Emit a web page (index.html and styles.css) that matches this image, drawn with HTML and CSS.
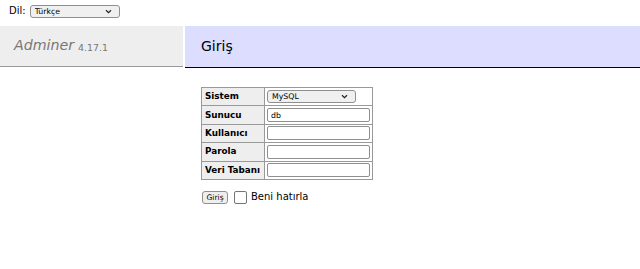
FILE: index.html
```html
<!DOCTYPE html>
<html lang="tr">
<head>
<meta charset="utf-8">
<title>Giriş - Adminer</title>
<link rel="stylesheet" href="styles.css">
</head>
<body>
<div class="lang">
  <span class="lang-label">Dil:</span>
  <span class="select select-lang">
    <select><option>Türkçe</option></select>
    <svg class="chev" width="7" height="5" viewBox="0 0 7 5"><path d="M1 1.2 L3.5 3.6 L6 1.2" fill="none" stroke="#222" stroke-width="1.2"/></svg>
  </span>
</div>
<div class="top">
  <h1 class="brand"><span class="brand-name">Adminer</span> <span class="version">4.17.1</span></h1>
  <h2 class="title">Giriş</h2>
</div>
<form class="login">
  <table class="layout">
    <tr><th>Sistem</th><td>
      <span class="select select-driver">
        <select><option>MySQL</option></select>
        <svg class="chev" width="7" height="5" viewBox="0 0 7 5"><path d="M1 1.2 L3.5 3.6 L6 1.2" fill="none" stroke="#222" stroke-width="1.2"/></svg>
      </span>
    </td></tr>
    <tr><th>Sunucu</th><td><input class="field" type="text" value="db"></td></tr>
    <tr><th>Kullanıcı</th><td><input class="field" type="text"></td></tr>
    <tr><th>Parola</th><td><input class="field" type="password"></td></tr>
    <tr><th>Veri Tabanı</th><td><input class="field" type="text"></td></tr>
  </table>
  <div class="actions">
    <button class="btn" type="button">Giriş</button>
    <label class="remember"><span class="check"></span>Beni hatırla</label>
  </div>
</form>
</body>
</html>
```

FILE: styles.css
```css
html, body {
  margin: 0;
  padding: 0;
  background: #fff;
  color: #000;
}
body {
  font-family: "DejaVu Sans", Verdana, sans-serif;
  font-size: 9.4px;
  line-height: 1.25;
}

.lang {
  display: flex;
  align-items: center;
  gap: 4px;
  height: 22px;
  padding-left: 9px;
  margin-bottom: 4px;
}
.lang-label {
  font-size: 10px;
}

.select {
  position: relative;
  display: inline-block;
}
.select select {
  -webkit-appearance: none;
  appearance: none;
  display: block;
  box-sizing: border-box;
  margin: 0;
  height: 13px;
  padding: 0 0 0 4px;
  border: 1px solid #8f8f8f;
  border-radius: 3px;
  background: #f0f0f0;
  color: #000;
  font-family: "DejaVu Sans", Verdana, sans-serif;
  font-size: 7.8px;
  line-height: 11px;
}
.select .chev {
  position: absolute;
  right: 8px;
  top: 4px;
}
.select-lang select {
  width: 90px;
}
.select-driver select {
  width: 89px;
}

.top {
  display: flex;
  align-items: flex-start;
}
.brand {
  box-sizing: border-box;
  width: 183px;
  height: 41px;
  margin: 0 2px 0 0;
  padding: 0 0 0 14px;
  display: flex;
  align-items: center;
  gap: 4px;
  background: #eee;
  border-bottom: 1px solid #999;
  color: #777;
  font-weight: normal;
  font-size: 14px;
}
.brand-name {
  font-style: italic;
  font-size: 14.2px;
}
.version {
  font-size: 9.4px;
  color: #777;
  padding-top: 3px;
}
.title {
  flex: 1;
  box-sizing: border-box;
  height: 42px;
  margin: 0;
  padding: 0 0 0 16px;
  display: flex;
  align-items: center;
  background: #ddf;
  border-bottom: 1px solid #000;
  font-weight: normal;
  font-size: 14px;
  color: #000;
}

.login {
  margin: 19px 0 0 201px;
}
.layout {
  border-collapse: collapse;
  font-size: 8.8px;
}
.layout th,
.layout td {
  border: 1px solid #999;
  height: 18.4px;
  padding: 0 2px;
  box-sizing: border-box;
}
.layout th {
  background: #eee;
  text-align: left;
  font-weight: bold;
  width: 63px;
  padding-left: 3px;
  white-space: nowrap;
}
.layout td {
  width: 108px;
}
.field {
  display: block;
  box-sizing: border-box;
  width: 103px;
  height: 14px;
  margin: 0;
  padding: 0 3px;
  border: 1px solid #8f8f8f;
  border-radius: 2px;
  background: #fff;
  font-family: "DejaVu Sans", Verdana, sans-serif;
  font-size: 7.8px;
  color: #000;
}

.actions {
  display: flex;
  align-items: center;
  margin-top: 11px;
  padding-left: 1px;
}
.btn {
  box-sizing: border-box;
  height: 13px;
  width: 26px;
  margin: 0 6px 0 0;
  padding: 0;
  border: 1px solid #8f8f8f;
  border-radius: 3px;
  background: #efefef;
  font-family: "DejaVu Sans", Verdana, sans-serif;
  font-size: 7.6px;
  color: #000;
}
.remember {
  display: flex;
  align-items: center;
  gap: 4px;
  font-family: "DejaVu Sans", Verdana, sans-serif;
  font-size: 10px;
}
.check {
  display: inline-block;
  box-sizing: border-box;
  width: 13px;
  height: 13px;
  border: 1px solid #767676;
  border-radius: 2px;
  background: #fff;
}
```
